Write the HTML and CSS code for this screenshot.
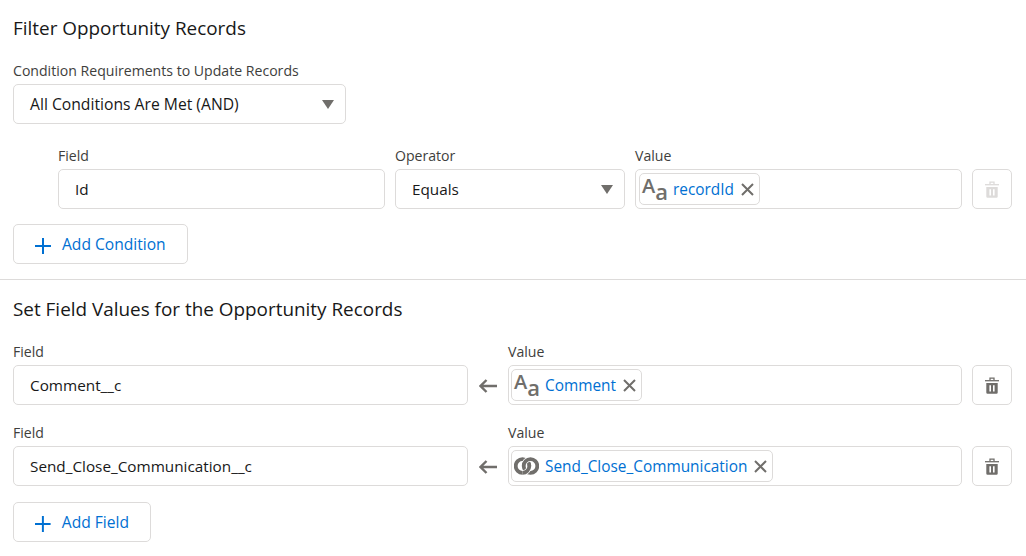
FILE: index.html
```html
<!DOCTYPE html>
<html lang="en">
<head>
    <meta charset="UTF-8">
    <title>Filter Opportunity Records</title>
    <link rel="stylesheet" href="styles.css">
</head>
<body>
    <svg class="defs" width="0" height="0">
        <symbol id="trash" viewBox="0 0 14 17">
            <path d="M5 3V1.2h4V3" fill="none" stroke="currentColor" stroke-width="1.3"/>
            <path d="M0 3.7h14" stroke="currentColor" stroke-width="1.3"/>
            <path fill-rule="evenodd" d="M1.3 6h11.4v9.6a1.2 1.2 0 0 1-1.2 1.2h-9a1.2 1.2 0 0 1-1.2-1.2zM4.4 8.2v6.2h1.6V8.2zM8 8.2v6.2h1.6V8.2z" fill="currentColor"/>
        </symbol>
        <symbol id="arrow" viewBox="0 0 18 14">
            <path d="M7.5 1L1.5 7l6 6M1.5 7H18" fill="none" stroke="currentColor" stroke-width="2.4"/>
        </symbol>
        <symbol id="close" viewBox="0 0 13 13">
            <path d="M1 1l11 11M12 1L1 12" fill="none" stroke="currentColor" stroke-width="2"/>
        </symbol>
        <symbol id="plus" viewBox="0 0 16 16">
            <path d="M8 0v16M0 8h16" fill="none" stroke="currentColor" stroke-width="2"/>
        </symbol>
    </svg>

    <section class="filter">
        <h2>Filter Opportunity Records</h2>
        <label class="label">Condition Requirements to Update Records</label>
        <div class="box select logic">All Conditions Are Met (AND)<span class="caret"></span></div>

        <div class="condition">
            <div>
                <label class="label">Field</label>
                <div class="box">Id</div>
            </div>
            <div>
                <label class="label">Operator</label>
                <div class="box select">Equals<span class="caret"></span></div>
            </div>
            <div>
                <label class="label">Value</label>
                <div class="box pill-box">
                    <span class="pill">
                        <span class="aa"><span class="big">A</span><span class="small">a</span></span>
                        <a href="#">recordId</a>
                        <svg class="x"><use href="#close"/></svg>
                    </span>
                </div>
            </div>
            <button class="trash-btn is-disabled"><svg class="trash"><use href="#trash"/></svg></button>
        </div>

        <button class="add add-condition"><svg class="plus"><use href="#plus"/></svg>Add Condition</button>
    </section>

    <section class="values">
        <h2>Set Field Values for the Opportunity Records</h2>

        <div class="assign">
            <div>
                <label class="label">Field</label>
                <div class="box">Comment__c</div>
            </div>
            <svg class="arrow"><use href="#arrow"/></svg>
            <div>
                <label class="label">Value</label>
                <div class="box pill-box">
                    <span class="pill">
                        <span class="aa"><span class="big">A</span><span class="small">a</span></span>
                        <a href="#">Comment</a>
                        <svg class="x"><use href="#close"/></svg>
                    </span>
                </div>
            </div>
            <button class="trash-btn"><svg class="trash"><use href="#trash"/></svg></button>
        </div>

        <div class="assign">
            <div>
                <label class="label">Field</label>
                <div class="box">Send_Close_Communication__c</div>
            </div>
            <svg class="arrow"><use href="#arrow"/></svg>
            <div>
                <label class="label">Value</label>
                <div class="box pill-box">
                    <span class="pill">
                        <svg class="rings" viewBox="0 0 25 18" fill="none">
                            <circle cx="8.5" cy="9" r="6.8" stroke="currentColor" stroke-width="3.8"/>
                            <circle cx="16.5" cy="9" r="6.8" stroke="#fff" stroke-width="5.2"/>
                            <circle cx="16.5" cy="9" r="6.8" stroke="currentColor" stroke-width="3.8"/>
                            <path d="M15.3 9a6.8 6.8 0 0 1-6.8 6.8" stroke="#fff" stroke-width="5.2"/>
                            <path d="M15.3 8.5V9a6.8 6.8 0 0 1-6.8 6.8" stroke="currentColor" stroke-width="3.8"/>
                        </svg>
                        <a href="#">Send_Close_Communication</a>
                        <svg class="x"><use href="#close"/></svg>
                    </span>
                </div>
            </div>
            <button class="trash-btn"><svg class="trash"><use href="#trash"/></svg></button>
        </div>

        <button class="add add-field"><svg class="plus"><use href="#plus"/></svg>Add Field</button>
    </section>
</body>
</html>
```

FILE: styles.css
```css
* {
    margin: 0;
    padding: 0;
    box-sizing: border-box;
}
body {
    font-family: "Open Sans", "Noto Sans", sans-serif;
    font-size: 15.3px;
    color: #181818;
    background: #fff;
    overflow: hidden;
}
.defs {
    position: absolute;
}
section {
    padding: 0 14px 0 13px;
}
.filter {
    padding-top: 15px;
    height: 280px;
    border-bottom: 1px solid #dddbda;
}
.values {
    padding-top: 16px;
}
h2 {
    font-size: 18.9px;
    font-weight: 400;
    line-height: 26px;
    color: #181818;
}
.label {
    display: block;
    font-size: 14.1px;
    line-height: 20px;
    height: 20px;
    margin-bottom: 3px;
    color: #3e3e3c;
}
.filter > .label {
    margin-top: 20px;
}
.box {
    display: flex;
    align-items: center;
    height: 40px;
    padding: 0 16px;
    border: 1px solid #dddbda;
    border-radius: 5px;
    background: #fff;
}
.select {
    justify-content: space-between;
    padding-right: 11px;
}
.logic {
    width: 333px;
    font-size: 15.7px;
}
.caret {
    width: 0;
    height: 0;
    border-left: 6.5px solid transparent;
    border-right: 6.5px solid transparent;
    border-top: 9px solid #706e6b;
}
.condition {
    display: grid;
    grid-template-columns: 327px 230px 327px 40px;
    column-gap: 10px;
    align-items: end;
    margin: 22px 0 15px 45px;
}
.assign {
    display: grid;
    grid-template-columns: 455px 20px 454px 40px;
    column-gap: 10px;
    align-items: end;
    margin-top: 20px;
}
.assign + .assign {
    margin-top: 18px;
}
.pill-box {
    padding: 0 3px;
}
.assign .pill-box {
    padding: 0 2px;
}
.pill {
    display: flex;
    align-items: center;
    height: 32px;
    padding: 0 5px 0 2px;
    border: 1px solid #dddbda;
    border-radius: 5px;
    color: #706e6b;
}
.pill a {
    font-size: 15.4px;
    color: #0070d2;
    text-decoration: none;
    margin: 1px 6.6px 0 0;
}
.aa {
    display: flex;
    width: 27px;
    margin-right: 4px;
    height: 30px;
    font-weight: 600;
    color: #706e6b;
}
.big {
    font-size: 20px;
    line-height: 24px;
}
.small {
    font-size: 22px;
    line-height: 34px;
}
.rings {
    width: 25px;
    height: 18px;
    margin: 0 6px 0 0;
}
.x {
    width: 13px;
    height: 13px;
}
.trash-btn {
    display: flex;
    align-items: center;
    justify-content: center;
    width: 40px;
    height: 40px;
    border: 1px solid #dddbda;
    border-radius: 5px;
    background: #fff;
    color: #706e6b;
}
.trash-btn.is-disabled {
    color: #dddbda;
}
.trash {
    width: 14px;
    height: 17px;
}
.arrow {
    width: 18px;
    height: 14px;
    justify-self: center;
    margin-bottom: 12px;
    color: #706e6b;
}
.add {
    display: flex;
    align-items: center;
    height: 40px;
    padding: 0 21px;
    border: 1px solid #dddbda;
    border-radius: 5px;
    background: #fff;
    color: #0070d2;
    font: inherit;
    font-size: 15.6px;
    white-space: nowrap;
}
.add-condition {
    width: 175px;
}
.add-field {
    width: 138px;
    margin-top: 16px;
}
.plus {
    width: 16px;
    height: 16px;
    margin: 3px 11px 0 0;
}
```
